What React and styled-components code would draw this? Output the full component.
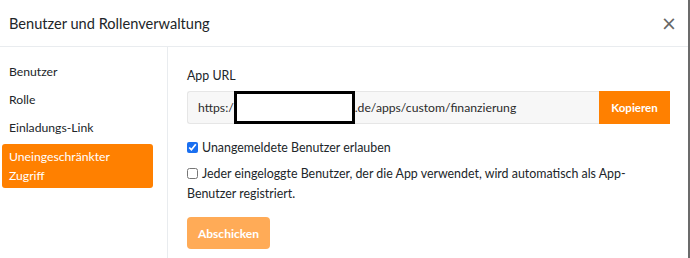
import React from "react";
import styled, { createGlobalStyle } from "styled-components";

const Global = createGlobalStyle`
  html, body { margin: 0; padding: 0; background: #fff; }
  body { font-family: Lato, "Open Sans", sans-serif; color: #212529; }
  * { box-sizing: border-box; }
`;

const Modal = styled.div`
  width: 690px;
  height: 258px;
  background: #fff;
  border-right: 2px solid #6b6b6b;
  display: flex;
  flex-direction: column;
  overflow: hidden;
`;

const Header = styled.div`
  height: 47px;
  flex: none;
  display: flex;
  align-items: center;
  justify-content: space-between;
  padding: 0 11px 0 9px;
  border-bottom: 1px solid #e9ecef;
`;

const Title = styled.h5`
  margin: 0;
  font-size: 14.6px;
  font-weight: 400;
  color: #212529;
`;

const Close = styled.button`
  border: 0;
  background: none;
  padding: 0;
  font-size: 19px;
  line-height: 1;
  color: #666;
  font-family: "DejaVu Sans", sans-serif;
  cursor: pointer;
`;

const Body = styled.div`
  flex: 1;
  display: flex;
`;

const Sidebar = styled.nav`
  width: 168px;
  flex: none;
  border-right: 1px solid #e9ecef;
  padding: 11px 14px 0 2px;
  display: flex;
  flex-direction: column;
`;

const NavItem = styled.div`
  padding: ${(p) => (p.$active ? "3px 7px" : "4px 7px")};
  margin-top: ${(p) => (p.$active ? "2px" : "0")};
  line-height: ${(p) => (p.$active ? "19px" : "20px")};
  font-size: 12.2px;
  border-radius: 3px;
  color: ${(p) => (p.$active ? "#fff" : "#212529")};
  background: ${(p) => (p.$active ? "#ff8000" : "transparent")};
`;

const Main = styled.div`
  flex: 1;
  padding: 19px 18px 0 19px;
  font-size: 12.4px;
`;

const Label = styled.div`
  line-height: 20px;
  margin-bottom: 5px;
`;

const InputGroup = styled.div`
  display: flex;
  height: 33px;
`;

const UrlField = styled.div`
  flex: 1;
  display: flex;
  align-items: center;
  background: #f7f7f7;
  border: 1px solid #e6e6e6;
  border-right: 0;
  border-radius: 3px 0 0 3px;
  padding-left: 10px;
  color: #2b2b2b;
  font-size: 12.2px;
  white-space: nowrap;
`;

const Redacted = styled.span`
  display: inline-block;
  width: 121px;
  height: 33px;
  margin-top: -1px;
  border: 3px solid #000;
  background: #fff;
`;

const CopyButton = styled.button`
  width: 71px;
  border: 0;
  background: #ff8000;
  color: #fff;
  font-family: inherit;
  font-weight: 700;
  font-size: 11.5px;
  padding: 0;
`;

const Check = styled.label`
  display: block;
  line-height: 20px;
  margin-top: ${(p) => p.$mt}px;
`;

const Box = styled.input`
  width: 11px;
  height: 11px;
  margin: 0 4px 0 0;
  vertical-align: -1px;
  accent-color: #1a6ff0;
`;

const Submit = styled.button`
  margin-top: 13px;
  width: 83px;
  height: 32px;
  border: 0;
  border-radius: 4px;
  background: #ffab57;
  color: #fff;
  font-family: inherit;
  font-weight: 700;
  font-size: 12px;
  padding: 0;
`;

export default function App() {
  return (
    <>
      <Global />
      <Modal>
        <Header>
          <Title>Benutzer und Rollenverwaltung</Title>
          <Close aria-label="Schließen">×</Close>
        </Header>
        <Body>
          <Sidebar>
            <NavItem>Benutzer</NavItem>
            <NavItem>Rolle</NavItem>
            <NavItem>Einladungs-Link</NavItem>
            <NavItem $active>Uneingeschränkter Zugriff</NavItem>
          </Sidebar>
          <Main>
            <Label>App URL</Label>
            <InputGroup>
              <UrlField>
                https:/<Redacted />.de/apps/custom/finanzierung
              </UrlField>
              <CopyButton>Kopieren</CopyButton>
            </InputGroup>
            <Check $mt={14}>
              <Box type="checkbox" defaultChecked />
              Unangemeldete Benutzer erlauben
            </Check>
            <Check $mt={6}>
              <Box type="checkbox" />
              Jeder eingeloggte Benutzer, der die App verwendet, wird automatisch als App-Benutzer registriert.
            </Check>
            <Submit>Abschicken</Submit>
          </Main>
        </Body>
      </Modal>
    </>
  );
}
